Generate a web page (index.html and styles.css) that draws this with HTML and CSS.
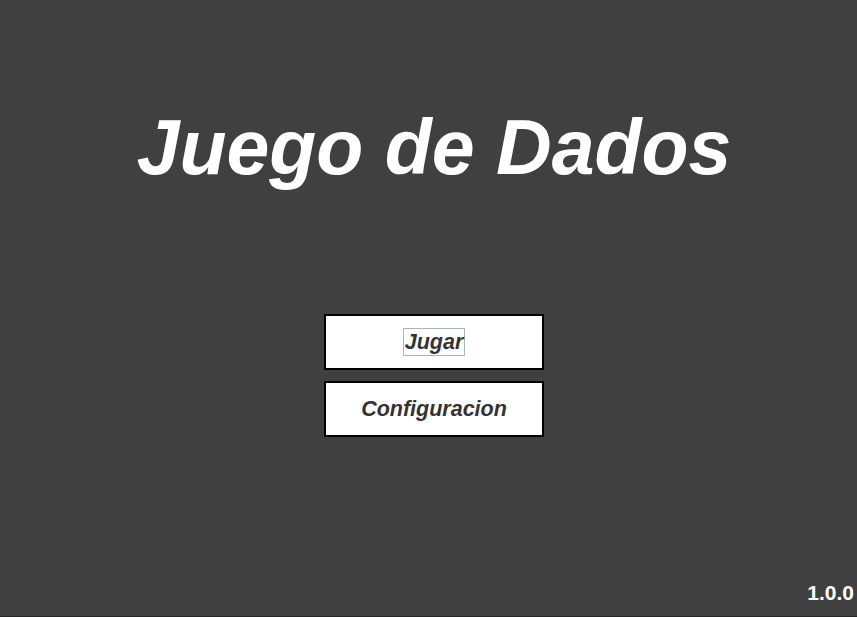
FILE: index.html
```html
<!DOCTYPE html>
<html lang="es">
<head>
<meta charset="utf-8">
<title>Juego de Dados</title>
<link rel="stylesheet" href="styles.css">
</head>
<body>
<main class="screen">
  <h1 class="title">Juego de Dados</h1>
  <nav class="menu">
    <button class="menu-btn"><span class="focus">Jugar</span></button>
    <button class="menu-btn">Configuracion</button>
  </nav>
  <div class="version">1.0.0</div>
</main>
</body>
</html>
```
FILE: styles.css
```css
html, body {
  margin: 0;
  padding: 0;
}
body {
  background: #404040;
  font-family: "Liberation Sans", Arial, sans-serif;
}
.screen {
  position: relative;
  box-sizing: border-box;
  height: 617px;
  border-bottom: 1px solid #262626;
  display: flex;
  flex-direction: column;
  align-items: center;
  padding-top: 103px;
  padding-left: 11px;
}
.title {
  margin: 0;
  color: #ffffff;
  font-size: 77px;
  font-weight: bold;
  font-style: italic;
  line-height: normal;
}
.menu {
  margin-top: 122px;
  display: flex;
  flex-direction: column;
  gap: 11px;
  padding-left: 0;
}
.menu-btn {
  box-sizing: border-box;
  width: 220px;
  height: 56px;
  margin: 0;
  padding: 0;
  background: #ffffff;
  border: 2px solid #000000;
  color: #333333;
  font-family: "Liberation Sans", Arial, sans-serif;
  font-size: 21.5px;
  font-weight: bold;
  font-style: italic;
  display: flex;
  align-items: center;
  justify-content: center;
}
.focus {
  display: inline-block;
  padding: 1px;
  border: 1px solid #a7b3c2;
  line-height: 24px;
}
.version {
  position: absolute;
  right: 3px;
  bottom: 12px;
  color: #ffffff;
  font-size: 21px;
  font-weight: bold;
  line-height: 23px;
}
```
